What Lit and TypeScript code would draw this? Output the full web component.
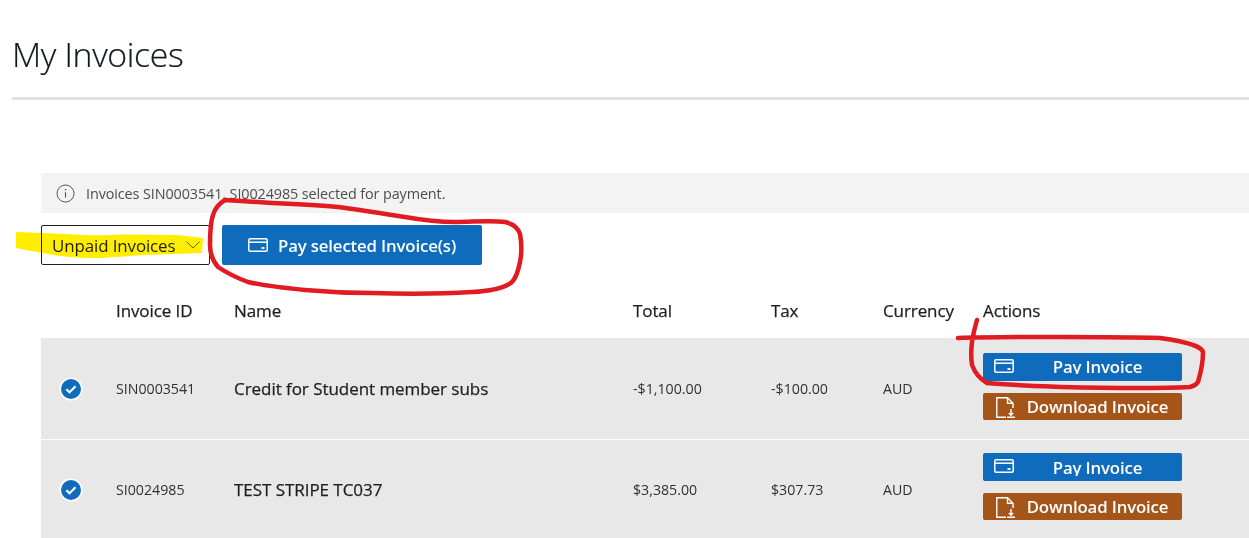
import { LitElement, html, css, svg } from "lit";
import { customElement } from "lit/decorators.js";

const card = html`<svg class="ico" width="20" height="14" viewBox="0 0 20 14" fill="none" stroke="currentColor" stroke-width="1.5"><rect x=".75" y=".75" width="18.5" height="12.5" rx="1.5"/><path d="M.5 4.2h19"/><path d="M13.5 10h3" stroke-width="1.8"/></svg>`;
const doc = html`<svg class="ico" width="19" height="21" viewBox="0 0 19 21" fill="none" stroke="currentColor" stroke-width="1.4"><path d="M10 20.2H.8V.8h10.7L17 6.3V11"/><path d="M11.5.8v5.5H17"/><path d="M15 12v6.2M12.8 16l2.2 2.2 2.2-2.2M11 20.3h8"/></svg>`;
const check = html`<svg class="chk" width="24" height="24" viewBox="0 0 24 24"><circle cx="12" cy="12" r="11.5" fill="#fff"/><circle cx="12" cy="12" r="10" fill="#0f6cbd"/><path d="M7.4 12.3l3.1 3 6-6" fill="none" stroke="#fff" stroke-width="2.2"/></svg>`;

const rows = [
  { id: "SIN0003541", name: "Credit for Student member subs", total: "-$1,100.00", tax: "-$100.00", cur: "AUD" },
  { id: "SI0024985", name: "TEST STRIPE TC037", total: "$3,385.00", tax: "$307.73", cur: "AUD" },
];

@customElement("app-root")
export class AppRoot extends LitElement {
  static styles = css`
    :host { display: block; position: relative; height: 538px; overflow: hidden; background: #fff; font-family: "Open Sans", "Noto Sans", sans-serif; color: #201f1e; }
    h1 { margin: 0 0 0 12px; padding-top: 32px; height: 63px; box-sizing: border-box; font-size: 33.8px; line-height: 44px; font-weight: 300; letter-spacing: -0.35px; color: #14181d; -webkit-text-stroke: 0.2px #14181d; white-space: nowrap; }
    .rule { margin-left: 12px; height: 3px; margin-top: 34px; background: #e3e3e3; }
    .content { margin: 73px 0 0 41px; }
    .info { height: 40px; background: #f3f3f3; display: flex; align-items: center; gap: 11px; padding-left: 15px; font-size: 14.4px; letter-spacing: -0.1px; color: #4d4d4d; }
    .tools { display: flex; gap: 12px; margin-top: 12px; }
    .select { width: 169px; height: 40px; box-sizing: border-box; border: 1px solid #201f1e; border-radius: 2px; display: flex; align-items: center; justify-content: space-between; padding: 0 9px 0 10px; font-size: 16.9px; letter-spacing: -0.1px; color: #201f1e; }
    .primary { width: 260px; height: 40px; background: #0f6cbd; color: #fff; border-radius: 2px; display: flex; align-items: center; gap: 10px; padding-left: 26px; box-sizing: border-box; font-size: 16.8px; font-weight: 600; letter-spacing: -0.15px; }
    .grid { display: grid; grid-template-columns: 75px 118px 399px 138px 112px 100px 1fr; align-items: center; }
    .head { height: 73px; font-size: 17px; letter-spacing: -0.1px; color: #201f1e; align-items: end; -webkit-text-stroke: 0.25px #201f1e; }
    .head span { padding-bottom: 17px; line-height: 21px; }
    .row { height: 102px; background: #e8e8e8; border-bottom: 1px solid #fff; box-sizing: border-box; font-size: 14.2px; color: #323130; }
    .row .name { font-size: 17px; letter-spacing: -0.05px; color: #201f1e; -webkit-text-stroke: 0.25px #201f1e; }
    .second { height: 110px; border-bottom: 0; padding-bottom: 11px; }
    .chk { display: block; margin-left: 18px; }
    .actions { display: flex; flex-direction: column; gap: 12px; width: 199px; align-self: start; margin-top: 15px; }
    .second .actions { margin-top: 13px; }
    .btn { position: relative; border-radius: 2px; color: #fff; font-size: 16.8px; font-weight: 600; letter-spacing: -0.15px; text-align: center; padding-left: 30px; box-sizing: border-box; white-space: nowrap; }
    .btn .ico { position: absolute; left: 11px; top: 6px; }
    .pay { height: 28px; background: #0f6cbd; }
    .pay .t { display: block; height: 21px; line-height: 27px; overflow: hidden; }
    .second .pay .t { height: 23px; line-height: 29px; }
    .dl { height: 27px; line-height: 27px; background: #a5541a; }
    .dl .ico { left: 13px; top: 4px; }
    .ink { position: absolute; left: 0; top: 0; pointer-events: none; }
    .hl { mix-blend-mode: multiply; }
  `;

  render() {
    return html`
      <h1>My Invoices</h1>
      <div class="rule"></div>
      <div class="content">
        <div class="info">
          <svg width="19" height="19" viewBox="0 0 19 19" fill="none" stroke="#555" stroke-width="1"><circle cx="9.5" cy="9.5" r="8.5"/><path d="M9.5 8.2v5.4" stroke-width="1.1"/><circle cx="9.5" cy="5.8" r=".8" fill="#555" stroke="none"/></svg>
          <span>Invoices SIN0003541, SI0024985 selected for payment.</span>
        </div>
        <div class="tools">
          <div class="select"><span>Unpaid Invoices</span><svg width="14" height="8" viewBox="0 0 14 8" fill="none" stroke="#666" stroke-width="1"><path d="M.5.7L7 7l6.5-6.3"/></svg></div>
          <div class="primary">${card}<span>Pay selected Invoice(s)</span></div>
        </div>
        <div class="grid head"><span></span><span>Invoice ID</span><span>Name</span><span>Total</span><span>Tax</span><span>Currency</span><span>Actions</span></div>
        ${rows.map((r, i) => html`
          <div class="grid row ${i ? "second" : ""}">
            ${check}
            <span>${r.id}</span>
            <span class="name">${r.name}</span>
            <span>${r.total}</span>
            <span>${r.tax}</span>
            <span>${r.cur}</span>
            <div class="actions">
              <div class="btn pay">${card}<span class="t">Pay Invoice</span></div>
              <div class="btn dl">${doc}Download Invoice</div>
            </div>
          </div>`)}
      </div>
      <svg class="ink hl" width="1249" height="538" viewBox="0 0 1249 538">
        <path d="M16 232C25 232 35 233 43 233C70 234 90 236 110 235C135 234 160 235 177 235C186 236 196 237 203 238L202 253C185 254 165 254 143 255C125 256 110 258 93 258C75 258 58 256 43 253C33 251 24 250 16 248Z" fill="#ffee00"/>
      </svg>
      <svg class="ink" width="1249" height="538" viewBox="0 0 1249 538" fill="none" stroke="#e01b22" stroke-width="4.5" stroke-linecap="round" stroke-linejoin="round">
        ${svg`<path d="M225 200C240 201 255 202 272 203C295 204 318 205 338 207C362 210 385 214 405 217C422 220 438 222 455 222C472 222 490 220 505 222C514 224 518 228 520 234C522 245 522 252 520 262C518 272 516 278 512 282C505 288 490 291 472 292C440 294 405 294 372 293C350 293 327 292 305 290C285 288 265 286 248 282C237 278 227 273 218 267C212 260 210 253 210 245C210 235 210 224 213 215C215 208 220 203 225 200"/>`}
        ${svg`<path d="M958 338C990 337 1025 337 1060 337C1095 337 1130 337 1160 338C1175 340 1185 342 1193 345C1199 347 1202 349 1203 352C1203 362 1201 372 1198 382C1196 385 1194 386 1190 387C1150 389 1105 388 1060 387C1035 386 1008 385 987 383C980 379 975 373 972 365C971 358 971 350 972 342C973 335 975 327 977 320"/>`}
      </svg>
    `;
  }
}
